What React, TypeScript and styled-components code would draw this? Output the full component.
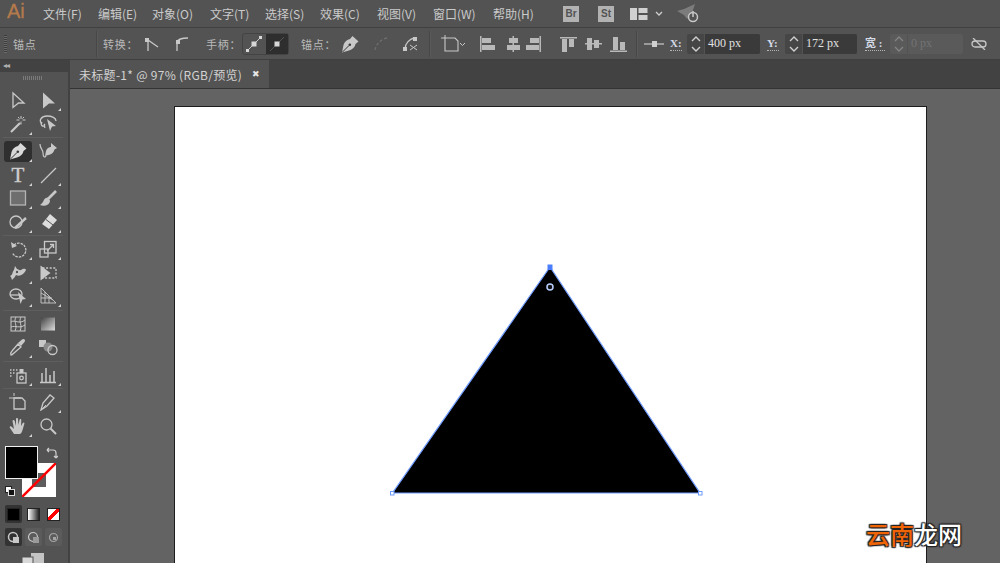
import React from 'react';
import styled, { createGlobalStyle } from 'styled-components';

const Global = createGlobalStyle`
  html, body { margin: 0; padding: 0; background: #636363; overflow: hidden; }
  body { font-family: "Noto Sans CJK SC", "Noto Sans", sans-serif; }
  * { box-sizing: border-box; }
`;

const Screen = styled.div`
  position: relative;
  width: 1000px;
  height: 563px;
  overflow: hidden;
  display: flex;
  flex-direction: column;
  background: #636363;
`;

const MenuBar = styled.div`
  height: 28px;
  flex: none;
  display: flex;
  align-items: center;
  background: #535353;
  border-bottom: 1px solid #404040;
  padding-left: 7px;
`;

const Logo = styled.div`
  width: 36px;
  font: 400 20px/23px "Liberation Sans", sans-serif;
  -webkit-text-stroke: 0.3px #b57a4c;
  color: #b57a4c;
  margin-bottom: 4px;
`;

const MenuItem = styled.div<{ $w: number }>`
  width: ${(p) => p.$w}px;
  font-size: 12px;
  line-height: 26px;
  color: #cacaca;
  white-space: nowrap;
`;

const AppBadge = styled.div<{ $ml: number }>`
  width: 16px;
  height: 16px;
  margin-left: ${(p) => p.$ml}px;
  background: #b2b2b2;
  color: #535353;
  font: 700 10px/16px "Liberation Sans", sans-serif;
  text-align: center;
`;

const IconSlot = styled.div<{ $ml: number }>`
  flex: none;
  display: flex;
  align-items: center;
  margin-left: ${(p) => p.$ml}px;
`;

const OptionsBar = styled.div`
  height: 32px;
  flex: none;
  display: flex;
  align-items: center;
  background: #535353;
  border-bottom: 1px solid #3f3f3f;
  padding-left: 4px;
`;

const Grip = styled.div`
  width: 3px;
  height: 18px;
  background: repeating-linear-gradient(to bottom, #3c3c3c 0 1px, #6a6a6a 1px 2px);
`;

const OptLabel = styled.div<{ $ml: number; $w: number }>`
  flex: none;
  width: ${(p) => p.$w}px;
  margin-left: ${(p) => p.$ml}px;
  font-size: 11px;
  line-height: 18px;
  color: #b9b9b9;
  letter-spacing: 0.8px;
  white-space: nowrap;
`;

const Divider = styled.div<{ $ml: number }>`
  flex: none;
  width: 2px;
  height: 26px;
  margin-left: ${(p) => p.$ml}px;
  background: #474747;
  border-right: 1px solid #5a5a5a;
`;

const HandleGroup = styled.div`
  flex: none;
  display: flex;
  margin-left: 6px;
  width: 47px;
  height: 22px;
  border: 1px solid #434343;
  border-radius: 3px;
`;

const HandleButton = styled.div<{ $active?: boolean }>`
  flex: 1;
  display: flex;
  align-items: center;
  justify-content: center;
  background: ${(p) => (p.$active ? '#2e2e2e' : 'transparent')};
`;

const FieldLabel = styled.div<{ $ml: number; $w: number }>`
  flex: none;
  width: ${(p) => p.$w}px;
  margin-left: ${(p) => p.$ml}px;
  font: 700 11px/14px "Liberation Serif", "Noto Sans CJK SC", serif;
  color: #d4dbe6;
  border-bottom: 1px dotted #b5b5b5;
  white-space: nowrap;
`;

const Field = styled.div<{ $ml: number; $w: number; $off?: boolean }>`
  flex: none;
  display: flex;
  height: 20px;
  width: ${(p) => p.$w}px;
  margin-left: ${(p) => p.$ml}px;
  border-radius: 2px;
  background: ${(p) => (p.$off ? '#5a5a5a' : '#464646')};
`;

const Spinner = styled.div`
  width: 18px;
  flex: none;
  display: flex;
  align-items: center;
  justify-content: center;
  border-right: 1px solid #535353;
`;

const FieldValue = styled.div<{ $off?: boolean }>`
  flex: 1;
  padding-left: 3px;
  background: ${(p) => (p.$off ? 'transparent' : '#3a3a3a')};
  border-radius: 0 2px 2px 0;
  font: 12px/19px "Liberation Serif", serif;
  color: ${(p) => (p.$off ? '#737373' : '#e2e2e2')};
  white-space: pre;
`;

const Body = styled.div`
  flex: 1;
  display: flex;
  min-height: 0;
`;

const ToolsPanel = styled.div`
  width: 70px;
  flex: none;
  display: flex;
  flex-direction: column;
  background: #535353;
  border-right: 2px solid #424242;
`;

const PanelHead = styled.div`
  height: 12px;
  flex: none;
  background: #424242;
  color: #b0b0b0;
  font: 8px/11px "DejaVu Sans", sans-serif;
  padding-left: 3px;
  letter-spacing: -1px;
`;

const PanelGrip = styled.div`
  width: 20px;
  height: 4px;
  margin: 4px 0 7px 23px;
  flex: none;
  background: repeating-linear-gradient(to right, #7a7a7a 0 1px, transparent 1px 2px);
`;

const ToolGroup = styled.div<{ $last?: boolean }>`
  display: grid;
  flex: none;
  grid-template-columns: 30px 29px;
  grid-auto-rows: 23.5px;
  margin-left: 3px;
  width: 60px;
  padding: 1.5px 0;
  border-bottom: ${(p) => (p.$last ? 'none' : '1px solid #5e5e5e')};
`;

const ToolCell = styled.div<{ $active?: boolean; $more?: boolean }>`
  position: relative;
  display: flex;
  align-items: center;
  justify-content: center;
  margin: 1px;
  background: ${(p) => (p.$active ? '#2f2f2f' : 'transparent')};
  border-radius: 3px;
  &::after {
    content: '';
    display: ${(p) => (p.$more ? 'block' : 'none')};
    position: absolute;
    right: 0;
    bottom: 0;
    border-left: 3px solid transparent;
    border-bottom: 3px solid #d2d2d2;
  }
`;

const TypeGlyph = styled.span`
  font: 400 21px/22px "Liberation Serif", serif;
  -webkit-text-stroke: 0.4px #cdcdcd;
  color: #cdcdcd;
`;

const ColorArea = styled.div`
  position: relative;
  height: 50px;
  margin-top: 7px;
  flex: none;
`;

const FillSwatch = styled.div`
  position: absolute;
  left: 5px;
  top: 0;
  width: 33px;
  height: 33px;
  background: #000;
  border: 1px solid #f0f0f0;
  z-index: 1;
`;

const StrokeSwatch = styled.svg`
  position: absolute;
  left: 22px;
  top: 17px;
`;

const SwapIcon = styled.svg`
  position: absolute;
  left: 46px;
  top: 1px;
`;

const DefaultIcon = styled.svg`
  position: absolute;
  left: 5px;
  top: 40px;
  z-index: 1;
`;

const ModeRow = styled.div<{ $mt: number }>`
  display: flex;
  gap: 3px;
  margin: ${(p) => p.$mt}px 0 0 5px;
  flex: none;
`;

const ModeCell = styled.div<{ $active?: boolean; $faint?: boolean }>`
  width: 17px;
  height: 18px;
  display: flex;
  align-items: center;
  justify-content: center;
  border-radius: 2px;
  background: ${(p) => (p.$active ? '#333' : p.$faint ? '#5b5b5b' : 'transparent')};
`;

const ModeSwatch = styled.div<{ $kind: 'color' | 'gradient' | 'none' }>`
  width: 13px;
  height: 13px;
  border: 1px solid #222;
  background: ${(p) =>
    p.$kind === 'color'
      ? '#000'
      : p.$kind === 'gradient'
        ? 'linear-gradient(to right, #fff, #222)'
        : 'linear-gradient(135deg, #fff 0 38%, #f00 38% 62%, #fff 62%)'};
`;

const ScreenMode = styled.div`
  display: flex;
  margin: 7px 0 0 22px;
  flex: none;
`;

const Workspace = styled.div`
  flex: 1;
  min-width: 0;
  display: flex;
  flex-direction: column;
`;

const TabBar = styled.div`
  height: 29px;
  flex: none;
  display: flex;
  background: #424242;
  border-bottom: 1px solid #333;
`;

const Tab = styled.div`
  width: 199px;
  height: 28px;
  display: flex;
  align-items: center;
  padding-left: 9px;
  background: #535353;
  font-size: 12px;
  letter-spacing: 0.3px;
  color: #d2d2d2;
  white-space: nowrap;
`;

const TabClose = styled.span`
  margin-left: 10px;
  font: 700 9px/12px "DejaVu Sans", sans-serif;
  color: #e6e6e6;
`;

const Canvas = styled.div`
  flex: 1;
  min-height: 0;
  padding: 17px 0 0 104px;
  overflow: hidden;
  background: #636363;
`;

const Artboard = styled.div`
  position: relative;
  width: 753px;
  height: 500px;
  background: #fff;
  border: 1px solid #1d1d1d;
`;

const TriangleSvg = styled.svg`
  position: absolute;
  left: 211px;
  top: 154px;
`;

const Watermark = styled.div`
  position: absolute;
  left: 866px;
  top: 516px;
  display: flex;
  font-size: 24px;
  line-height: 35px;
  font-weight: 500;
`;

const WaterChar = styled.span<{ $orange?: boolean }>`
  color: ${(p) => (p.$orange ? '#f06408' : '#fff')};
  text-shadow: 0 0 2px #222, 1px 1px 1px #222, -1px -1px 1px #222, 1px -1px 1px #222, -1px 1px 1px #222;
`;

const C = '#c8c8c8';

const Ic: React.FC<{ w?: number; h?: number; children: React.ReactNode }> = ({ w = 18, h = 18, children }) => (
  <svg width={w} height={h} viewBox={`0 0 ${w} ${h}`} fill="none" stroke={C} strokeWidth={1.3}>
    {children}
  </svg>
);

const PenNib = ({ fill = C, size = 18 }: { fill?: string; size?: number }) => (
  <svg width={size} height={size} viewBox="0 0 18 18">
    <path d="M11.5 1L17.5 6.5 14.5 9C14 12 11.5 14.5 8 15.5L1 17.5 2.5 10C3.5 7 6 4.5 9 4z" fill={fill} />
    <path d="M1.5 17L8 10.5" stroke="#3a3a3a" strokeWidth={1} />
    <circle cx="8.8" cy="9.8" r="1.3" fill="#3a3a3a" />
  </svg>
);

const tools: React.ReactNode[][] = [
  [
    <ToolCell key="sel"><Ic><path d="M4 2l11 10H9.5L4 16.5z" /></Ic></ToolCell>,
    <ToolCell key="dir" $more><Ic><path d="M4 1.5l12 11H10l-6 5z" fill={C} stroke="none" /></Ic></ToolCell>,
    <ToolCell key="wand" $more><Ic><path d="M2 17l9-9" strokeWidth={2.2} /><path d="M12 1v3M12 6.5v3M7.5 5h3M13.5 5h3M9 2l1.5 1.5M15 2l-1.5 1.5" strokeWidth={1} /></Ic></ToolCell>,
    <ToolCell key="lasso"><svg width="20" height="18" viewBox="0 0 20 18" fill="none" stroke={C} strokeWidth={1.3}><path d="M4 9C0 5 4 1 9 1s9 2 9 5" /><path d="M4 7c-2 2 0 5 2 4s-1-4 1 2" /><path d="M9 4l9 7-4 .5L12 16z" fill={C} stroke="none" /></svg></ToolCell>,
  ],
  [
    <ToolCell key="pen" $active $more><PenNib fill="#d8d8d8" /></ToolCell>,
    <ToolCell key="curv"><svg width="20" height="18" viewBox="0 0 20 18"><path d="M13 1l6 5-2.5 1.5C16 10 14 12.5 10.5 13L7 14l1-5c1-3 3-4 5-4z" fill={C} /><path d="M2 2c0 5 3 5 3 9s2 5 3 3" fill="none" stroke={C} strokeWidth={1.2} /></svg></ToolCell>,
    <ToolCell key="type" $more><TypeGlyph>T</TypeGlyph></ToolCell>,
    <ToolCell key="line" $more><Ic><path d="M2 17L17 2" /></Ic></ToolCell>,
    <ToolCell key="rect" $more><Ic><rect x="1.5" y="2" width="15" height="14" fill="#6e6e6e" stroke="#b4b4b4" /></Ic></ToolCell>,
    <ToolCell key="brush" $more><Ic><path d="M17 2L9 10" strokeWidth={2.6} /><path d="M8.5 8.5C4 9 5 14 1 16c4 2 10 0 10-4.5z" fill={C} stroke="none" /></Ic></ToolCell>,
    <ToolCell key="shaper" $more><Ic><circle cx="7" cy="9" r="6" /><path d="M6 15L17 5" strokeWidth={2.4} /></Ic></ToolCell>,
    <ToolCell key="eraser" $more><svg width="20" height="18" viewBox="0 0 20 18"><path d="M12 1l7 6-8 9-7-5z" fill="#dcdcdc" /><path d="M8 6.5l7 5.5" stroke="#535353" strokeWidth={1} /></svg></ToolCell>,
  ],
  [
    <ToolCell key="rot" $more><Ic><path d="M5 5a7 7 0 1 1-1.5 8" strokeDasharray="2.5 1" /><path d="M2 2l1 6 5-2z" fill={C} stroke="none" /></Ic></ToolCell>,
    <ToolCell key="scale" $more><Ic><rect x="1" y="9" width="8" height="8" /><rect x="5.5" y="1.5" width="11.5" height="11.5" /><path d="M8 11l6-6M11 4.5h3.5V8" /></Ic></ToolCell>,
    <ToolCell key="warp" $more><Ic><path d="M1 12c3-1 2-4 4-6l1-4 2 3c2 0 2 2 4 1 2-1 4-2 5 0-2 4-6 7-10 5-1 2-3 4-4 5l-1-3z" fill={C} stroke="none" /><circle cx="8" cy="8" r="1.2" fill="#535353" stroke="none" /></Ic></ToolCell>,
    <ToolCell key="free"><Ic><rect x="3.5" y="4" width="13.5" height="10" strokeDasharray="2 1.6" /><path d="M1.5 1.5l10 7.5-10 7.5z" fill={C} stroke="none" /></Ic></ToolCell>,
    <ToolCell key="builder" $more><Ic><ellipse cx="7" cy="7" rx="6" ry="5" /><path d="M1 8h9" /><path d="M9 5l8 7-3.5.5-2 4.5z" fill={C} stroke="none" /></Ic></ToolCell>,
    <ToolCell key="persp" $more><Ic><path d="M2 1v15h15L2 1zM2 6l12 7M2 11h11M6 5v11M10 9v7" strokeWidth={0.9} /></Ic></ToolCell>,
  ],
  [
    <ToolCell key="mesh"><Ic><rect x="2" y="2" width="14" height="14" strokeWidth={1} /><path d="M2 7c4-3 8 3 14-2M2 12c5-2 8 2 14-2M7 2C4 7 9 10 6 16M12 2c-3 5 2 8-1 14" strokeWidth={1} /></Ic></ToolCell>,
    <ToolCell key="grad"><Ic><defs><linearGradient id="gr" x1="0" y1="0" x2="1" y2="1"><stop offset="0" stopColor="#444" /><stop offset="1" stopColor="#ddd" /></linearGradient></defs><rect x="2" y="2.5" width="14" height="13" fill="url(#gr)" stroke="none" /></Ic></ToolCell>,
    <ToolCell key="drop" $more><Ic><path d="M2 17c-1-2 0-3 1-4l6-7 3 3-7 6c-1 1-2 2-3 2z" /><path d="M9 5l4-3.5c2-1.5 4 .5 2.5 2.5L12 8z" fill={C} stroke="none" /></Ic></ToolCell>,
    <ToolCell key="blend"><svg width="20" height="18" viewBox="0 0 20 18" fill="none" stroke={C} strokeWidth={1.3}><rect x="1" y="2" width="7" height="7" fill={C} stroke="none" /><circle cx="10" cy="9" r="4.5" fill="#8a8a8a" stroke="none" /><circle cx="14.5" cy="12" r="4.5" /></svg></ToolCell>,
  ],
  [
    <ToolCell key="spray" $more><Ic><path d="M1 4h1.5M4 4h1.5M7 4h1.5M1 7h1.5M4 7h1.5M1 10h1.5" strokeWidth={1.5} /><rect x="8" y="7" width="9" height="10" /><rect x="10.5" y="3" width="4" height="4" fill={C} stroke="none" /><circle cx="12.5" cy="12" r="1.8" /></Ic></ToolCell>,
    <ToolCell key="chart" $more><Ic><path d="M1 16.5h16M3 16V7M7 16V2M11 16V9M15 16V5" strokeWidth={1.5} /></Ic></ToolCell>,
  ],
  [
    <ToolCell key="board"><Ic><path d="M0 5h12M5 0v3" strokeWidth={1} /><path d="M5 5h8l3 3v8H5z" /></Ic></ToolCell>,
    <ToolCell key="slice" $more><Ic><path d="M2 17l2-7 7-8 4 3-7 8z" /><path d="M2 17l5-5" strokeWidth={1} /></Ic></ToolCell>,
    <ToolCell key="hand" $more><Ic><path d="M5 17l-4-6c-1-2 1-2.5 2-1l2 2-1.5-8c0-1.5 1.8-1.5 2.2 0l1.3 5V2c0-1.5 2-1.5 2 0l.5 6 1-5c.3-1.5 2-1 1.8.4L12 9l1.8-3c.8-1.2 2-.4 1.5 1L13.5 13c-.5 2-1.5 4-3 4z" fill={C} stroke="none" /></Ic></ToolCell>,
    <ToolCell key="zoom"><Ic><circle cx="7.5" cy="7.5" r="5.5" /><path d="M11.5 11.5L17 17" strokeWidth={2} /></Ic></ToolCell>,
  ],
];

const menus: [string, number][] = [
  ['文件(F)', 55],
  ['编辑(E)', 54],
  ['对象(O)', 58],
  ['文字(T)', 55],
  ['选择(S)', 55],
  ['效果(C)', 57],
  ['视图(V)', 56],
  ['窗口(W)', 60],
  ['帮助(H)', 41],
];

const Chev = ({ up }: { up?: boolean }) => (
  <path d={up ? 'M-4 0l4-4 4 4' : 'M-4-3l4 4 4-4'} fill="none" stroke="#cfcfcf" strokeWidth={1.4} />
);

const SpinnerIcon = ({ off }: { off?: boolean }) => (
  <Spinner>
    <svg width="12" height="18" viewBox="-6 -9 12 18" opacity={off ? 0.35 : 1}>
      <g transform="translate(0,-3)"><Chev up /></g>
      <g transform="translate(0,6)"><Chev /></g>
    </svg>
  </Spinner>
);

const AlignIcon = ({ kind }: { kind: number }) => {
  const shapes: Record<number, React.ReactNode> = {
    0: <><rect x="1" y="0" width="1.5" height="16" /><rect x="3" y="2" width="9" height="5" /><rect x="3" y="9" width="13" height="5" /></>,
    1: <><rect x="7.5" y="0" width="1.5" height="16" /><rect x="4" y="2" width="9" height="5" /><rect x="2" y="9" width="13" height="5" /></>,
    2: <><rect x="14.5" y="0" width="1.5" height="16" /><rect x="5" y="2" width="9" height="5" /><rect x="1" y="9" width="13" height="5" /></>,
    3: <><rect x="0" y="1" width="17" height="1.5" /><rect x="2" y="3" width="5" height="13" /><rect x="9" y="3" width="5" height="8" /></>,
    4: <><rect x="0" y="7" width="17" height="1.5" /><rect x="2" y="2" width="5" height="12" /><rect x="9" y="4" width="5" height="8" /></>,
    5: <><rect x="0" y="14.5" width="17" height="1.5" /><rect x="3" y="1" width="5" height="13" /><rect x="10" y="6" width="5" height="8" /></>,
  };
  return <svg width="17" height="16" viewBox="0 0 17 16" fill="#b9b9b9">{shapes[kind]}</svg>;
};

export default function App() {
  return (
    <Screen>
      <Global />
      <MenuBar>
        <Logo>Ai</Logo>
        {menus.map(([m, w]) => (
          <MenuItem key={m} $w={w}>{m}</MenuItem>
        ))}
        <AppBadge $ml={29}>Br</AppBadge>
        <AppBadge $ml={19}>St</AppBadge>
        <IconSlot $ml={16}>
          <svg width="18" height="12" viewBox="0 0 18 12" fill="#d0d0d0">
            <rect x="0" y="0" width="7" height="12" />
            <rect x="8.5" y="0" width="9" height="5" />
            <rect x="8.5" y="7" width="9" height="5" />
          </svg>
        </IconSlot>
        <IconSlot $ml={7}>
          <svg width="8" height="6" viewBox="0 0 8 6" fill="none" stroke="#d0d0d0" strokeWidth={1.3}><path d="M1 1l3 3 3-3" /></svg>
        </IconSlot>
        <IconSlot $ml={14}>
          <svg width="24" height="20" viewBox="0 0 24 20">
            <path d="M0 7l7-2 11-5-3 9-5 6-3-4z" fill="#7c7c7c" />
            <circle cx="16" cy="13" r="4.5" fill="#535353" stroke="#c8c8c8" strokeWidth={1.5} />
            <path d="M16 7v6" stroke="#c8c8c8" strokeWidth={1.5} />
          </svg>
        </IconSlot>
      </MenuBar>

      <OptionsBar>
        <Grip />
        <OptLabel $ml={6} $w={50}>锚点</OptLabel>
        <Divider $ml={33} />
        <OptLabel $ml={5} $w={38}>转换：</OptLabel>
        <IconSlot $ml={3}>
          <Ic w={16} h={16}><rect x="1" y="2" width="4" height="4" fill={C} stroke="none" /><path d="M4 3v12M4 4l10 7" /></Ic>
        </IconSlot>
        <IconSlot $ml={14}>
          <Ic w={16} h={16}><rect x="2" y="4" width="4" height="4" fill={C} stroke="none" /><path d="M3 15V6c1-3 6-4 11-4" /></Ic>
        </IconSlot>
        <OptLabel $ml={16} $w={30}>手柄：</OptLabel>
        <HandleGroup>
          <HandleButton>
            <Ic w={18} h={18}><path d="M2 16L16 2" strokeWidth={1} /><rect x="6.5" y="6.5" width="5" height="5" fill="#d8d8d8" stroke="none" /><rect x="1" y="14" width="3" height="3" fill="#d8d8d8" stroke="none" /><rect x="14" y="1" width="3" height="3" fill="#d8d8d8" stroke="none" /></Ic>
          </HandleButton>
          <HandleButton $active>
            <Ic w={18} h={18}><path d="M2 16L16 2" strokeWidth={1} stroke="#555" /><rect x="6.5" y="6.5" width="5" height="5" fill="#d8d8d8" stroke="none" /></Ic>
          </HandleButton>
        </HandleGroup>
        <OptLabel $ml={12} $w={36}>锚点：</OptLabel>
        <IconSlot $ml={4}><PenNib size={18} /></IconSlot>
        <IconSlot $ml={14}>
          <Ic w={16} h={16}><path d="M2 14C3 8 8 3 14 2" stroke="#6e6e6e" strokeDasharray="3 2" /></Ic>
        </IconSlot>
        <IconSlot $ml={13}>
          <Ic w={16} h={16}><path d="M3 13C3 7 8 3 12 2" /><rect x="1" y="11" width="4" height="4" fill={C} stroke="none" /><rect x="11" y="1" width="4" height="4" fill={C} stroke="none" /><path d="M8 9l7 5M8 14l7-5" strokeWidth={1} /></Ic>
        </IconSlot>
        <Divider $ml={11} />
        <IconSlot $ml={10}>
          <Ic w={24} h={18}><path d="M4 3h10l3 3v10H4z" strokeWidth={1.1} /><path d="M0 3h4M4 0v3" strokeWidth={1} /><path d="M19 8l2.5 2.5L24 8" strokeWidth={1} /></Ic>
        </IconSlot>
        <IconSlot $ml={14}><AlignIcon kind={0} /></IconSlot>
        <IconSlot $ml={9}><AlignIcon kind={1} /></IconSlot>
        <IconSlot $ml={3}><AlignIcon kind={2} /></IconSlot>
        <IconSlot $ml={18}><AlignIcon kind={3} /></IconSlot>
        <IconSlot $ml={8}><AlignIcon kind={4} /></IconSlot>
        <IconSlot $ml={8}><AlignIcon kind={5} /></IconSlot>
        <Divider $ml={9} />
        <IconSlot $ml={6}>
          <svg width="20" height="8" viewBox="0 0 20 8"><rect x="0" y="3.3" width="20" height="1.4" fill="#b9b9b9" /><rect x="8" y="1" width="5" height="6" fill="#d0d0d0" /></svg>
        </IconSlot>
        <FieldLabel $ml={6} $w={12}>X:</FieldLabel>
        <Field $ml={5} $w={73}>
          <SpinnerIcon />
          <FieldValue>400 px</FieldValue>
        </Field>
        <FieldLabel $ml={7} $w={12}>Y:</FieldLabel>
        <Field $ml={6} $w={72}>
          <SpinnerIcon />
          <FieldValue>172 px</FieldValue>
        </Field>
        <FieldLabel $ml={8} $w={20}>宽 :</FieldLabel>
        <Field $ml={5} $w={73} $off>
          <SpinnerIcon off />
          <FieldValue $off>0 px</FieldValue>
        </Field>
        <IconSlot $ml={8}>
          <Ic w={16} h={12}><rect x="1" y="3" width="14" height="6" rx="3" /><path d="M2 0l12 12" /></Ic>
        </IconSlot>
      </OptionsBar>

      <Body>
        <ToolsPanel>
          <PanelHead>◂◂</PanelHead>
          <PanelGrip />
          {tools.map((group, i) => (
            <ToolGroup key={i} $last={i === tools.length - 1}>{group}</ToolGroup>
          ))}
          <ColorArea>
            <FillSwatch />
            <StrokeSwatch width="34" height="34" viewBox="0 0 34 34">
              <rect width="34" height="34" fill="#fff" />
              <rect x="10" y="10" width="14" height="14" fill="#5d5d5d" />
              <path d="M0 34L34 0" stroke="#f00" strokeWidth={2.5} />
            </StrokeSwatch>
            <SwapIcon width="12" height="12" viewBox="0 0 12 12" fill="none" stroke="#d0d0d0" strokeWidth={1.2}>
              <path d="M1 3h6c2 0 3 1 3 3v5M1 3l2-2M1 3l2 2M10 11l-2-2M10 11l2-2" />
            </SwapIcon>
            <DefaultIcon width="10" height="10" viewBox="0 0 10 10">
              <rect x="0.5" y="0.5" width="6" height="6" fill="#fff" stroke="#222" />
              <rect x="3.5" y="3.5" width="6" height="6" fill="#111" stroke="#ddd" />
            </DefaultIcon>
          </ColorArea>
          <ModeRow $mt={9}>
            <ModeCell $active><ModeSwatch $kind="color" /></ModeCell>
            <ModeCell><ModeSwatch $kind="gradient" /></ModeCell>
            <ModeCell><ModeSwatch $kind="none" /></ModeCell>
          </ModeRow>
          <ModeRow $mt={5}>
            <ModeCell $active><svg width="13" height="13" viewBox="0 0 13 13"><circle cx="6" cy="6" r="4.5" fill="none" stroke={C} strokeWidth={1.5} /><rect x="6" y="6" width="6" height="6" fill={C} /></svg></ModeCell>
            <ModeCell $faint><svg width="13" height="13" viewBox="0 0 13 13"><circle cx="6" cy="6" r="4.5" fill="none" stroke={C} strokeWidth={1.2} /><rect x="6" y="6" width="6" height="6" fill="#9a9a9a" /></svg></ModeCell>
            <ModeCell $faint><svg width="13" height="13" viewBox="0 0 13 13"><circle cx="6.5" cy="6.5" r="4" fill="none" stroke="#a5a5a5" strokeWidth={1.2} /><rect x="6" y="6" width="3" height="3" fill="#a5a5a5" /></svg></ModeCell>
          </ModeRow>
          <ScreenMode>
            <svg width="22" height="12" viewBox="0 0 22 12">
              <rect x="9" y="0" width="13" height="12" fill="#c4c4c4" />
              <rect x="0" y="4" width="11" height="8" fill="#d8d8d8" stroke="#535353" />
            </svg>
          </ScreenMode>
        </ToolsPanel>

        <Workspace>
          <TabBar>
            <Tab>
              未标题-1* @ 97% (RGB/预览)
              <TabClose>✖</TabClose>
            </Tab>
          </TabBar>
          <Canvas>
            <Artboard>
              <TriangleSvg width="320" height="240" viewBox="0 0 320 240">
                <path d="M164 6L6.500 232H314z" fill="#000" stroke="#6f9bff" strokeWidth={1.2} />
                <rect x="161.5" y="3.5" width="5" height="5.5" fill="#4c7fff" />
                <rect x="4.500" y="230.5" width="3.5" height="3.5" fill="#fff" stroke="#6f9bff" />
                <rect x="312.500" y="230.5" width="3.5" height="3.5" fill="#fff" stroke="#6f9bff" />
                <circle cx="164" cy="26" r="3" fill="#111" stroke="#b9ceff" strokeWidth={1.5} />
              </TriangleSvg>
            </Artboard>
          </Canvas>
        </Workspace>
      </Body>

      <Watermark>
        <WaterChar $orange>云</WaterChar>
        <WaterChar $orange>南</WaterChar>
        <WaterChar>龙</WaterChar>
        <WaterChar>网</WaterChar>
      </Watermark>
    </Screen>
  );
}
